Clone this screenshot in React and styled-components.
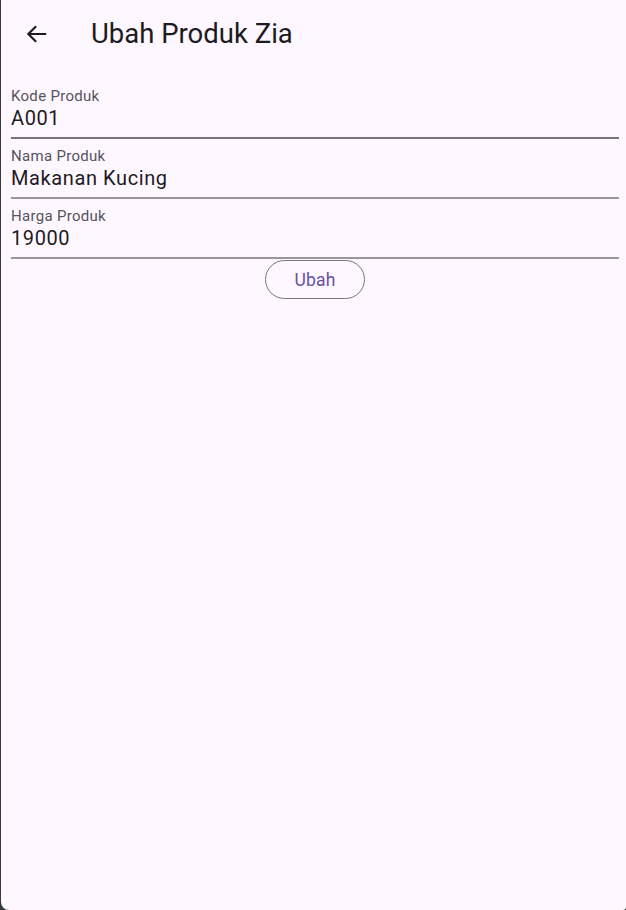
import styled, { createGlobalStyle } from "styled-components";

const Global = createGlobalStyle`
  html, body {
    margin: 0;
    padding: 0;
    background: #3a3a3c;
  }
  body {
    font-family: Roboto, "Liberation Sans", sans-serif;
  }
`;

const Screen = styled.div`
  margin-left: 1px;
  height: 910px;
  background: #fef7ff;
  border-bottom-left-radius: 8px;
  border-bottom-right-radius: 3px;
  display: flex;
  flex-direction: column;
`;

const AppBar = styled.header`
  height: 67px;
  display: flex;
  align-items: center;
  padding-left: 14px;
  gap: 32px;
`;

const BackButton = styled.button`
  width: 44px;
  height: 44px;
  border: none;
  background: none;
  padding: 0;
  display: flex;
  align-items: center;
  justify-content: center;
  color: #1d1b20;
`;

const Title = styled.h1`
  margin: 0;
  font-size: 27.5px;
  font-weight: 400;
  color: #1d1b20;
`;

const Form = styled.form`
  display: flex;
  flex-direction: column;
  gap: 5px;
  padding: 17px 7px 0 10px;
`;

const Field = styled.label`
  display: flex;
  flex-direction: column;
  height: 55px;
  box-sizing: border-box;
  border-bottom: 2px solid ${(p) => (p.$dark ? "#77737b" : "#99959d")};
`;

const Label = styled.span`
  font-size: 15px;
  color: #57535c;
  letter-spacing: 0.3px;
  margin-top: 3px;
  line-height: 18px;
`;

const Value = styled.span`
  font-size: 20px;
  color: #1d1b20;
  letter-spacing: 0.6px;
  line-height: 26px;
`;

const Actions = styled.div`
  display: flex;
  justify-content: center;
  margin-top: -4px;
`;

const OutlineButton = styled.button`
  width: 100px;
  height: 39px;
  border: 1px solid #79747e;
  border-radius: 20px;
  background: transparent;
  color: #6750a4;
  font-family: Roboto, "Liberation Sans", sans-serif;
  font-size: 17.5px;
  font-weight: 400;
  letter-spacing: 0.2px;
`;

const fields = [
  { label: "Kode Produk", value: "A001", dark: true },
  { label: "Nama Produk", value: "Makanan Kucing" },
  { label: "Harga Produk", value: "19000" },
];

export default function App() {
  return (
    <>
      <Global />
      <Screen>
        <AppBar>
          <BackButton aria-label="Kembali">
            <svg width="26" height="26" viewBox="0 0 24 24" fill="none">
              <path
                d="M20.5 12H4.2M11.2 4.8L4 12L11.2 19.2"
                stroke="currentColor"
                strokeWidth="2"
              />
            </svg>
          </BackButton>
          <Title>Ubah Produk Zia</Title>
        </AppBar>
        <Form onSubmit={(e) => e.preventDefault()}>
          {fields.map((f) => (
            <Field key={f.label} $dark={f.dark}>
              <Label>{f.label}</Label>
              <Value>{f.value}</Value>
            </Field>
          ))}
          <Actions>
            <OutlineButton>Ubah</OutlineButton>
          </Actions>
        </Form>
      </Screen>
    </>
  );
}
